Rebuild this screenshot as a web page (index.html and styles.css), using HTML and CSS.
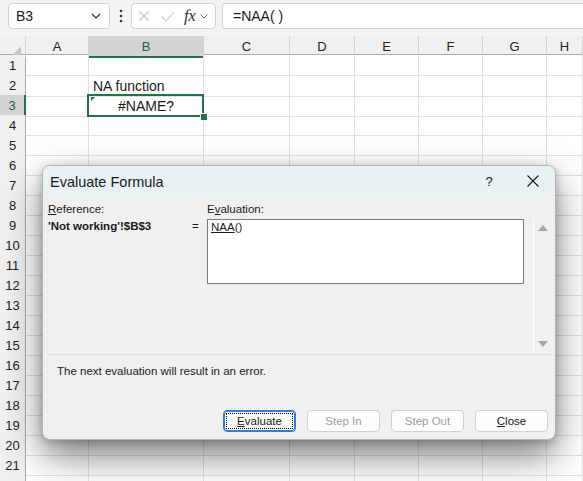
FILE: index.html
```html
<!DOCTYPE html>
<html>
<head>
<meta charset="utf-8">
<link rel="stylesheet" href="styles.css">
</head>
<body>
<div class="topbar">
  <div class="namebox"><span>B3</span>
    <svg class="chev" width="10" height="6" viewBox="0 0 10 6"><path d="M1 1l4 4 4-4" fill="none" stroke="#333" stroke-width="1.2"/></svg>
  </div>
  <div class="dots"><svg width="4" height="14" viewBox="0 0 4 14"><circle cx="2" cy="2" r="1.3" fill="#333"/><circle cx="2" cy="7" r="1.3" fill="#333"/><circle cx="2" cy="12" r="1.3" fill="#333"/></svg></div>
  <div class="fbtns">
    <svg width="12" height="12" viewBox="0 0 12 12"><path d="M1 1l10 10M11 1L1 11" stroke="#c4c4c4" stroke-width="1.1" fill="none"/></svg>
    <svg class="check" width="14" height="11" viewBox="0 0 14 11"><path d="M1 6l4 4 8-9" stroke="#c4c4c4" stroke-width="1.1" fill="none"/></svg>
    <span class="fx">fx</span>
    <svg class="chev2" width="8" height="5" viewBox="0 0 8 5"><path d="M0.5 0.5l3.5 3.5 3.5-3.5" fill="none" stroke="#777" stroke-width="1"/></svg>
  </div>
  <div class="formula">=NAA( )</div>
</div>

<div class="sheet">
  <div class="hrow"><div class="corner"></div><div class="ch">A</div><div class="ch selh">B</div><div class="ch">C</div><div class="ch">D</div><div class="ch">E</div><div class="ch">F</div><div class="ch">G</div><div class="ch">H</div></div>
  <div class="row"><div class="rh">1</div><i></i><i></i><i></i><i></i><i></i><i></i><i></i><i></i></div>
  <div class="row"><div class="rh">2</div><i></i><i class="txt">NA function</i><i></i><i></i><i></i><i></i><i></i><i></i></div>
  <div class="row"><div class="rh selr">3</div><i></i><i class="txt sel"><span class="err"></span>#NAME?<span class="handle"></span></i><i></i><i></i><i></i><i></i><i></i><i></i></div>
  <div class="row"><div class="rh">4</div><i></i><i></i><i></i><i></i><i></i><i></i><i></i><i></i></div>
  <div class="row"><div class="rh">5</div><i></i><i></i><i></i><i></i><i></i><i></i><i></i><i></i></div>
  <div class="row"><div class="rh">6</div><i></i><i></i><i></i><i></i><i></i><i></i><i></i><i></i></div>
  <div class="row"><div class="rh">7</div><i></i><i></i><i></i><i></i><i></i><i></i><i></i><i></i></div>
  <div class="row"><div class="rh">8</div><i></i><i></i><i></i><i></i><i></i><i></i><i></i><i></i></div>
  <div class="row"><div class="rh">9</div><i></i><i></i><i></i><i></i><i></i><i></i><i></i><i></i></div>
  <div class="row"><div class="rh">10</div><i></i><i></i><i></i><i></i><i></i><i></i><i></i><i></i></div>
  <div class="row"><div class="rh">11</div><i></i><i></i><i></i><i></i><i></i><i></i><i></i><i></i></div>
  <div class="row"><div class="rh">12</div><i></i><i></i><i></i><i></i><i></i><i></i><i></i><i></i></div>
  <div class="row"><div class="rh">13</div><i></i><i></i><i></i><i></i><i></i><i></i><i></i><i></i></div>
  <div class="row"><div class="rh">14</div><i></i><i></i><i></i><i></i><i></i><i></i><i></i><i></i></div>
  <div class="row"><div class="rh">15</div><i></i><i></i><i></i><i></i><i></i><i></i><i></i><i></i></div>
  <div class="row"><div class="rh">16</div><i></i><i></i><i></i><i></i><i></i><i></i><i></i><i></i></div>
  <div class="row"><div class="rh">17</div><i></i><i></i><i></i><i></i><i></i><i></i><i></i><i></i></div>
  <div class="row"><div class="rh">18</div><i></i><i></i><i></i><i></i><i></i><i></i><i></i><i></i></div>
  <div class="row"><div class="rh">19</div><i></i><i></i><i></i><i></i><i></i><i></i><i></i><i></i></div>
  <div class="row"><div class="rh">20</div><i></i><i></i><i></i><i></i><i></i><i></i><i></i><i></i></div>
  <div class="row"><div class="rh">21</div><i></i><i></i><i></i><i></i><i></i><i></i><i></i><i></i></div>
  <div class="row"><div class="rh"></div><i></i><i></i><i></i><i></i><i></i><i></i><i></i><i></i></div>
</div>

<div class="dialog">
  <div class="titlebar">
    <div class="title">Evaluate Formula</div>
    <div class="help">?</div>
    <div class="close"><svg width="12" height="12" viewBox="0 0 12 12"><path d="M0.5 0.5l11 11M11.5 0.5l-11 11" stroke="#1a1a1a" stroke-width="1.1" fill="none"/></svg></div>
  </div>
  <div class="dbody">
    <div class="evgrid">
      <div class="lbl"><u>R</u>eference:</div>
      <div></div>
      <div class="lbl">E<u>v</u>aluation:</div>
      <div class="scroll">
        <svg width="10" height="6" viewBox="0 0 10 6"><path d="M0 6L5 0l5 6z" fill="#a6a6a6"/></svg>
        <svg width="10" height="6" viewBox="0 0 10 6"><path d="M0 0h10L5 6z" fill="#a6a6a6"/></svg>
      </div>
      <div class="ref">'Not working'!$B$3</div>
      <div class="eq">=</div>
      <div class="evbox"><u>NAA</u>()</div>
    </div>
    <div class="sep"></div>
    <div class="msg">The next evaluation will result in an error.</div>
    <div class="buttons">
      <div class="btn primary"><span class="focus"><u>E</u>valuate</span></div>
      <div class="btn disabled">Step In</div>
      <div class="btn disabled">Step Out</div>
      <div class="btn"><u>C</u>lose</div>
    </div>
  </div>
</div>
</body>
</html>
```

FILE: styles.css
```css
* { box-sizing: border-box; }
html, body { margin: 0; padding: 0; }
body {
  width: 583px;
  height: 481px;
  overflow: hidden;
  background: #ffffff;
  font-family: "Liberation Sans", Arial, sans-serif;
  position: relative;
  color: #1a1a1a;
}

/* formula bar */
.topbar {
  height: 36px;
  background: #f3f3f3;
  display: flex;
  align-items: flex-start;
  padding: 3px 0 0 8px;
}
.namebox {
  width: 102px;
  height: 26px;
  background: #fff;
  border: 1px solid #d4d4d4;
  border-radius: 4px;
  display: flex;
  align-items: center;
  justify-content: space-between;
  padding: 0 8px 0 7px;
  font-size: 14px;
}
.dots {
  width: 21px;
  height: 26px;
  display: flex;
  align-items: center;
  justify-content: center;
  padding-left: 1px;
}
.fbtns {
  width: 85px;
  height: 26px;
  background: #fff;
  border: 1px solid #d4d4d4;
  border-radius: 4px;
  display: flex;
  align-items: center;
  padding-left: 6px;
}
.fbtns .check { margin-left: 11px; }
.fx {
  font-family: "Liberation Serif", "Times New Roman", serif;
  font-style: italic;
  font-size: 17px;
  margin-left: 9px;
  color: #333;
  letter-spacing: -0.5px;
}
.chev2 { margin-left: 5px; }
.formula {
  margin-left: 6px;
  flex: 1;
  height: 26px;
  background: #fff;
  border: 1px solid #d4d4d4;
  border-right: none;
  border-radius: 4px 0 0 4px;
  font-size: 14px;
  padding-left: 10px;
  line-height: 24px;
}

/* sheet */
.sheet { display: flex; flex-direction: column; }
.hrow, .row {
  display: grid;
  grid-template-columns: 26px 63px 115px 86px 65px 64px 64px 64px 1fr;
}
.hrow {
  height: 19px;
  background: #f0f0f0;
  border-bottom: 1px solid #ababab;
}
.corner {
  position: relative;
  border-right: 1px solid #d2d2d2;
  background: linear-gradient(135deg, transparent 62%, #c4c4c4 62%) no-repeat right 4px bottom 3px / 11px 11px;
}
.ch {
  border-right: 1px solid #d2d2d2;
  font-size: 13px;
  text-align: center;
  line-height: 18px;
  padding-top: 2px;
  color: #222;
}
.ch.selh {
  background: #d3d3d3;
  color: #1d5e38;
  border-bottom: 2px solid #217346;
}
.row { height: 20px; }
.row > i {
  border-right: 1px solid #e1e1e1;
  border-bottom: 1px solid #e1e1e1;
  font-style: normal;
  font-size: 14px;
  line-height: 19px;
  padding-top: 2px;
}
.rh {
  background: #f0f0f0;
  border-right: 1px solid #ababab;
  border-bottom: 1px solid #d8d8d8;
  font-size: 13px;
  text-align: center;
  line-height: 18px;
  padding-top: 2px;
  color: #222;
}
.rh.selr {
  background: #d3d3d3;
  color: #1d5e38;
  border-right: 2px solid #217346;
}
.row > .txt { padding-left: 4px; }
.row > .sel {
  position: relative;
  text-align: center;
  padding-left: 0;
}
.sel::before {
  content: "";
  position: absolute;
  left: -2px; top: -1px; right: -1px; bottom: -1px;
  border: 2px solid #217346;
}
.err {
  position: absolute;
  left: 2px; top: 2px;
  width: 0; height: 0;
  border-top: 4px solid #217346;
  border-right: 4px solid transparent;
}
.handle {
  position: absolute;
  width: 6px; height: 6px;
  background: #217346;
  border: 1px solid #fff;
  box-sizing: content-box;
  right: -5px; bottom: -5px;
}

/* dialog */
.dialog {
  position: absolute;
  left: 42px;
  top: 165px;
  width: 514px;
  height: 275px;
  background: #f0f0f0;
  border: 1px solid #b3b3b3;
  border-radius: 8px;
  box-shadow: 0 16px 36px rgba(0,0,0,0.5), 0 2px 10px rgba(0,0,0,0.2);
  display: flex;
  flex-direction: column;
  overflow: hidden;
}
.titlebar {
  height: 30px;
  background: #e8f1f4;
  display: flex;
  align-items: center;
  padding-left: 7px;
  flex: none;
}
.title {
  font-size: 14.5px;
  flex: 1;
  color: #1a1a1a;
  padding-top: 1px;
}
.help {
  font-size: 13px;
  width: 20px;
  text-align: center;
  margin-right: 28px;
}
.close {
  width: 12px;
  margin-right: 16px;
  display: flex;
}
.dbody {
  flex: 1;
  display: flex;
  flex-direction: column;
  padding: 6px 0 7px 5px;
}
.evgrid {
  display: grid;
  grid-template-columns: 142px 17px 317px 1fr;
  grid-template-rows: 17px 65px 68px;
}
.lbl {
  font-size: 11.5px;
  line-height: 15px;
}
.scroll {
  grid-column: 4;
  grid-row: 2 / 4;
  margin-left: 9px;
  width: 17px;
  border-left: 1px solid #ffffff;
  display: flex;
  flex-direction: column;
  justify-content: space-between;
  align-items: center;
  padding: 6px 0 5px 1px;
}
.ref {
  grid-column: 1;
  grid-row: 2;
  font-size: 11.5px;
  font-weight: bold;
  padding-top: 1px;
}
.eq {
  grid-column: 2;
  grid-row: 2;
  font-size: 11.5px;
  padding-top: 1px;
  padding-left: 2px;
}
.evbox {
  grid-column: 3;
  grid-row: 2;
  background: #fff;
  border: 1px solid #7a7a7a;
  font-size: 11.5px;
  padding: 1px 0 0 3px;
}
.sep {
  height: 1px;
  background: #dcdcdc;
  margin: 2px 4px 0 1px;
}
.msg {
  font-size: 11.5px;
  padding: 9px 0 0 9px;
  line-height: 14px;
}
.buttons {
  margin-top: auto;
  display: flex;
  justify-content: flex-end;
  gap: 11px;
  padding-right: 7px;
}
.btn {
  width: 73px;
  height: 22px;
  background: #fdfdfd;
  border: 1px solid #d0d0d0;
  border-radius: 4px;
  font-size: 11.5px;
  display: flex;
  align-items: center;
  justify-content: center;
  color: #1a1a1a;
}
.btn.disabled { color: #9d9d9d; }
.btn.primary {
  border: 1px solid #2f7fd6;
  box-shadow: inset 0 0 0 1px #2f7fd6;
  padding: 2px;
}
.focus {
  width: 100%;
  height: 100%;
  border: 1px dotted #000;
  display: flex;
  align-items: center;
  justify-content: center;
}
```
